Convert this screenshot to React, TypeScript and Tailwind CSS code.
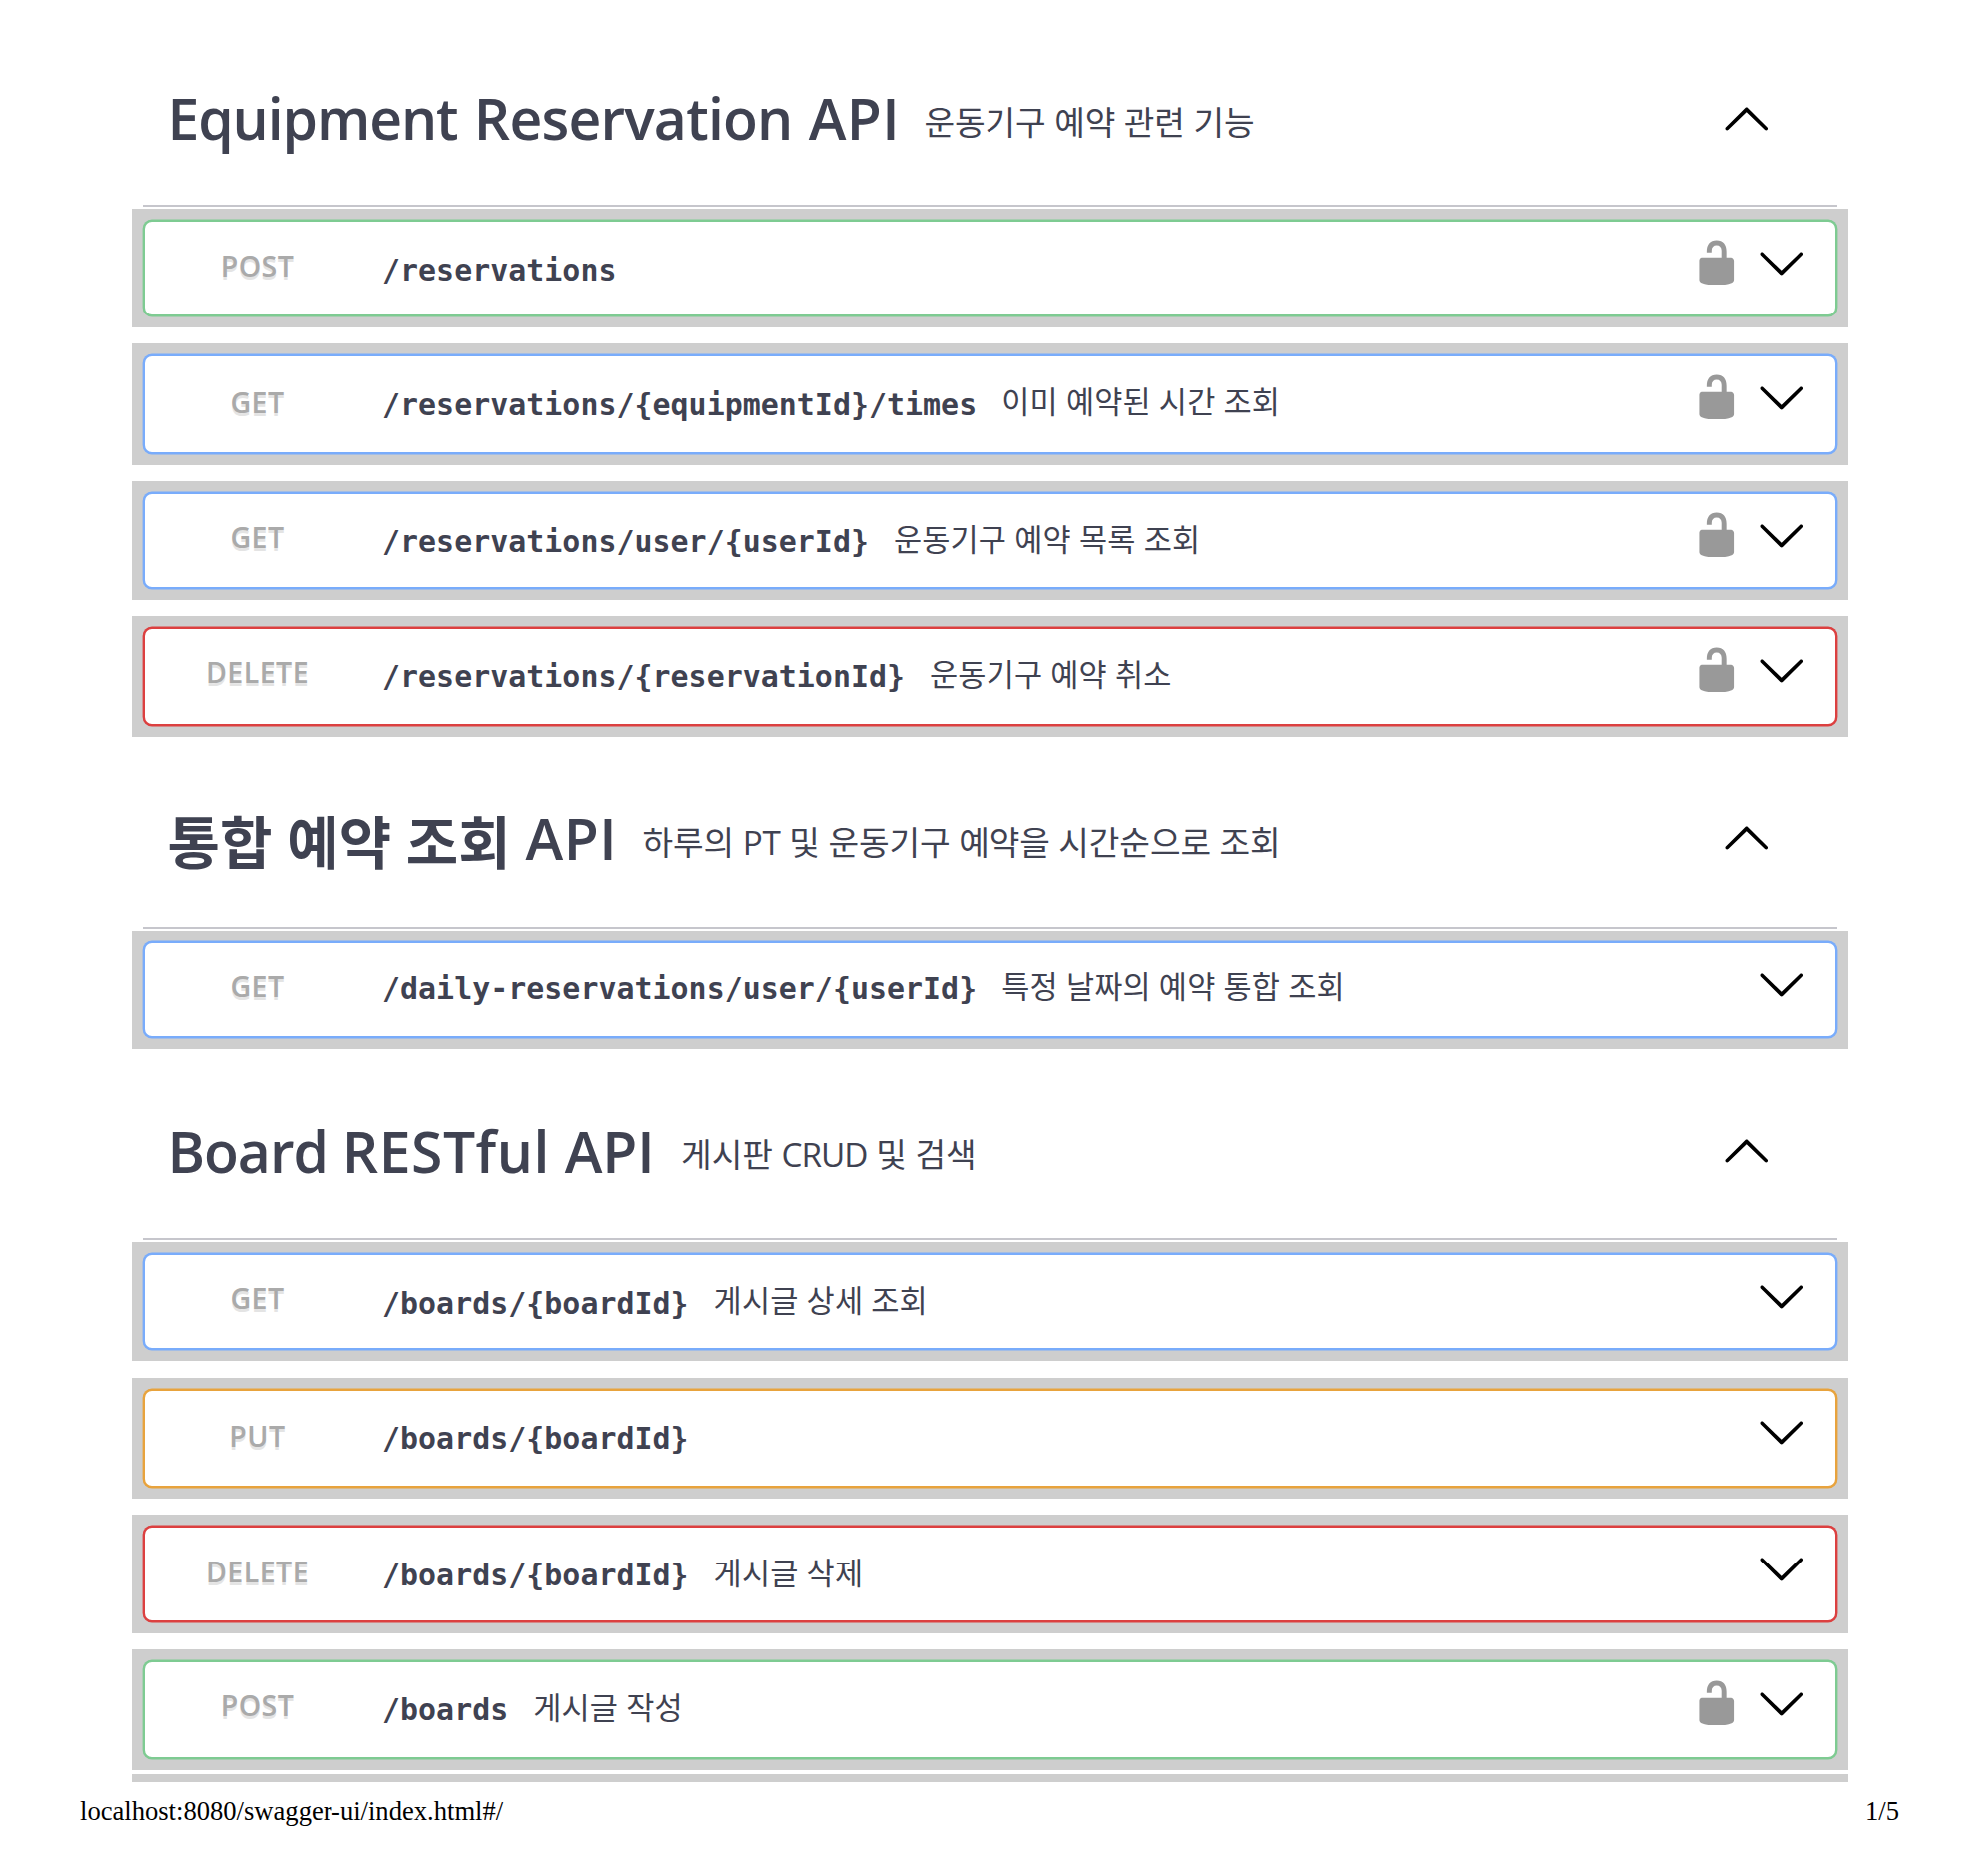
import React from "react";

type Method = "POST" | "GET" | "PUT" | "DELETE";

interface Operation {
  method: Method;
  path: string;
  summary?: string;
  locked?: boolean;
  box: string;
  badge: string;
  pathShift: string;
  summaryShift: string;
}

interface Section {
  id: string;
  title: React.ReactNode;
  description: React.ReactNode;
  header: string;
  titleStyle: string;
  descriptionStyle: string;
  operations: Operation[];
}

const borderColors: Record<Method, string> = {
  POST: "border-[#7ecb92] shadow-[0_0_0_0.4px_#7ecb92]",
  GET: "border-[#79acfb] shadow-[0_0_0_0.4px_#79acfb]",
  PUT: "border-[#e8a33d] shadow-[0_0_0_0.4px_#e8a33d]",
  DELETE: "border-[#dc4040] shadow-[0_0_0_0.4px_#dc4040]",
};

const sections: Section[] = [
  {
    id: "equipment",
    title: (
      <>
        <span className="tracking-[-1.1px]">Equipment</span> <span className="tracking-[-0.8px]">Reservation</span>{" "}
        <span className="tracking-[0.4px]">API</span>
      </>
    ),
    description: "운동기구 예약 관련 기능",
    header: "h-[207px] pt-[93px]",
    titleStyle: "-mt-[5px] w-[758px] [word-spacing:1.5px]",
    descriptionStyle: "mt-[9px] tracking-[-0.1px]",
    operations: [
      { method: "POST", path: "/reservations", locked: true, box: "mt-[2px] h-[119px]", badge: "mt-[24px]", pathShift: "mt-[28.5px]", summaryShift: "mt-[25.5px]" },
      { method: "GET", path: "/reservations/{equipmentId}/times", summary: "이미 예약된 시간 조회", locked: true, box: "mt-[16px] h-[122px]", badge: "mt-[26px]", pathShift: "mt-[28.5px]", summaryShift: "mt-[24.5px]" },
      { method: "GET", path: "/reservations/user/{userId}", summary: "운동기구 예약 목록 조회", locked: true, box: "mt-[16px] h-[119px]", badge: "mt-[23px]", pathShift: "mt-[27.5px]", summaryShift: "mt-[24.5px]" },
      { method: "DELETE", path: "/reservations/{reservationId}", summary: "운동기구 예약 취소", locked: true, box: "mt-[16px] h-[121px]", badge: "mt-[23px]", pathShift: "mt-[27.5px]", summaryShift: "mt-[24.5px]" },
    ],
  },
  {
    id: "daily",
    title: (
      <>
        통합 예약 조회 <span className="align-[3.5px] tracking-[0.5px]">API</span>
      </>
    ),
    description: "하루의 PT 및 운동기구 예약을 시간순으로 조회",
    header: "h-[192px] pt-[75px]",
    titleStyle: "-mt-[4px] w-[476px]",
    descriptionStyle: "mt-[10px] tracking-[-0.1px]",
    operations: [
      { method: "GET", path: "/daily-reservations/user/{userId}", summary: "특정 날짜의 예약 통합 조회", box: "mt-[2px] h-[119px]", badge: "mt-[23px]", pathShift: "mt-[25.5px]", summaryShift: "mt-[22.5px]" },
    ],
  },
  {
    id: "board",
    title: (
      <>
        <span className="tracking-[-1px]">Board</span> <span className="tracking-[0.5px]">RESTful</span>{" "}
        <span>API</span>
      </>
    ),
    description: (
      <>
        게시판 <span className="tracking-[-1px]">CRUD</span> 및 검색
      </>
    ),
    header: "h-[191px] pt-[76px]",
    titleStyle: "-mt-[4px] w-[514.5px]",
    descriptionStyle: "mt-[9px]",
    operations: [
      { method: "GET", path: "/boards/{boardId}", summary: "게시글 상세 조회", box: "mt-[2px] h-[119px]", badge: "mt-[23px]", pathShift: "mt-[28.5px]", summaryShift: "mt-[24.5px]" },
      { method: "PUT", path: "/boards/{boardId}", box: "mt-[17px] h-[121px]", badge: "mt-[25px]", pathShift: "mt-[27.5px]", summaryShift: "mt-[25.5px]" },
      { method: "DELETE", path: "/boards/{boardId}", summary: "게시글 삭제", box: "mt-[16px] h-[119px]", badge: "mt-[24px]", pathShift: "mt-[27.5px]", summaryShift: "mt-[25px]" },
      { method: "POST", path: "/boards", summary: "게시글 작성", locked: true, box: "mt-[16px] h-[121px]", badge: "mt-[23px]", pathShift: "mt-[27.5px]", summaryShift: "mt-[24.5px]" },
    ],
  },
];

function ChevronUp() {
  return (
    <svg viewBox="0 0 20 20" className="size-[49.5px] shrink-0" fill="#000">
      <path d="M 17.418 14.908 C 17.69 15.176 18.127 15.176 18.397 14.908 C 18.667 14.64 18.668 14.207 18.397 13.939 L 10.489 6.109 C 10.219 5.841 9.782 5.841 9.51 6.109 L 1.602 13.939 C 1.332 14.207 1.332 14.64 1.602 14.908 C 1.873 15.176 2.31 15.176 2.581 14.908 L 10 7.767 L 17.418 14.908 Z" />
    </svg>
  );
}

function ChevronDown() {
  return (
    <svg viewBox="0 0 20 20" className="size-[49.5px] shrink-0" fill="#000">
      <path d="M 17.418 6.109 C 17.69 5.841 18.127 5.841 18.397 6.109 C 18.667 6.377 18.668 6.81 18.397 7.078 L 10.489 14.908 C 10.219 15.176 9.782 15.176 9.51 14.908 L 1.602 7.078 C 1.332 6.81 1.332 6.377 1.602 6.109 C 1.873 5.841 2.31 5.841 2.581 6.109 L 10 13.25 L 17.418 6.109 Z" />
    </svg>
  );
}

function Unlocked() {
  return (
    <svg viewBox="0 0 20 20" className="size-[49.5px] shrink-0" fill="#999">
      <path d="M15.8 8H14V5.6C14 2.703 12.665 1 10 1 7.334 1 6 2.703 6 5.6V6h2v-.801C8 3.754 8.797 3 10 3c1.203 0 2 .754 2 2.199V8H4c-.553 0-1 .646-1 1.199V17c0 .549.428 1.139.951 1.307l1.197.387C5.672 18.861 6.55 19 7.1 19h5.8c.549 0 1.428-.139 1.951-.307l1.196-.387c.524-.167.953-.757.953-1.306V9.199C17 8.646 16.352 8 15.8 8z" />
    </svg>
  );
}

function OperationRow({ op }: { op: Operation }) {
  return (
    <div className={`mx-[132px] w-[1718.5px] bg-[#cecece] pt-[11px] pr-[10.5px] pb-[11px] pl-[11px] ${op.box}`}>
      <div className={`flex h-full items-start rounded-[9px] border-2 bg-white ${borderColors[op.method]}`}>
        <div className={`w-[225px] text-center font-['Open_Sans'] text-[28.5px] leading-[40px] font-semibold tracking-[0.5px] text-[#aaa] [text-shadow:0_2.5px_0_#e4e4e4] ${op.badge}`}>
          {op.method}
        </div>
        <div className={`ml-[13px] font-['DejaVu_Sans_Mono'] text-[29.9px] leading-[40px] font-bold tracking-[0.04px] whitespace-nowrap text-[#3f4251] ${op.pathShift}`}>
          {op.path}
        </div>
        {op.summary && (
          <div className={`ml-[25px] font-['Open_Sans','Noto_Sans_CJK_KR',sans-serif] text-[30.6px] leading-[40px] tracking-[0.15px] whitespace-nowrap text-[#3f4251] ${op.summaryShift}`}>
            {op.summary}
          </div>
        )}
        <div className="mt-[15.5px] mr-[29px] ml-auto flex gap-[15px]">
          {op.locked && <Unlocked />}
          <ChevronDown />
        </div>
      </div>
    </div>
  );
}

export default function App() {
  return (
    <main className="h-[1879px] w-[1983px] overflow-hidden bg-white">
      {sections.map((section) => (
        <section key={section.id}>
          <div className={`mr-[143px] ml-[142.5px] flex items-start border-b-2 border-[#c6c6cc] pr-[66px] pl-[25px] ${section.header}`}>
            <h2 className={`shrink-0 font-['Open_Sans','Noto_Sans_CJK_KR',sans-serif] text-[57px] leading-[60px] font-semibold whitespace-nowrap text-[#3f4251] ${section.titleStyle}`}>
              {section.title}
            </h2>
            <p className={`font-['Open_Sans','Noto_Sans_CJK_KR',sans-serif] text-[33.3px] leading-[40px] whitespace-nowrap text-[#3f4251] ${section.descriptionStyle}`}>
              {section.description}
            </p>
            <div className="ml-auto">
              <ChevronUp />
            </div>
          </div>
          {section.operations.map((op) => (
            <OperationRow key={op.method + op.path} op={op} />
          ))}
        </section>
      ))}
      <div className="mt-[4px] ml-[132px] h-[8px] w-[1718.5px] bg-[#cecece]" />
      <footer className="flex justify-between pt-[13px] pr-[81px] pl-[80px] font-['Liberation_Serif'] text-[26.6px] leading-[32px] text-black">
        <span>localhost:8080/swagger-ui/index.html#/</span>
        <span>1/5</span>
      </footer>
    </main>
  );
}
